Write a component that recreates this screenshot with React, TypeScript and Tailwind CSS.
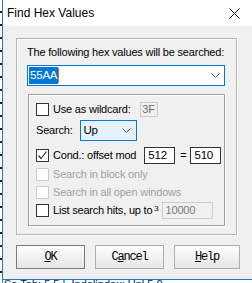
import React from 'react'

const sans = { fontFamily: '"Liberation Sans", Arial, sans-serif' }

function Check({ checked = false, disabled = false }: { checked?: boolean; disabled?: boolean }) {
  return (
    <div
      className={`w-[13px] h-[13px] shrink-0 bg-white border ${disabled ? 'border-[#cccccc]' : 'border-[#333333]'} flex items-center justify-center`}
    >
      {checked && (
        <svg width="11" height="11" viewBox="0 0 11 11">
          <polyline points="1.5,5.5 4,8.5 9.5,1.5" fill="none" stroke="#333" strokeWidth="1.2" />
        </svg>
      )}
    </div>
  )
}

function Chevron() {
  return (
    <svg width="9" height="5" viewBox="0 0 9 5">
      <polyline points="0.5,0.5 4.5,4.5 8.5,0.5" fill="none" stroke="#555" strokeWidth="1" />
    </svg>
  )
}

function Button({ children, isDefault = false, w }: { children: React.ReactNode; isDefault?: boolean; w: string }) {
  return (
    <div
      className={`${w} h-[24px] flex items-center justify-center border ${isDefault ? 'border-[#7a7a7a]' : 'border-[#adadad]'} bg-gradient-to-b from-[#fdfdfd] to-[#e6e6e6] text-[12px] tracking-[-1.2px] text-black`}
      style={{ fontFamily: '"Liberation Mono", "Courier New", monospace' }}
    >
      {children}
    </div>
  )
}

export default function App() {
  return (
    <div className="w-[252px] h-[283px] overflow-hidden flex bg-white text-black" style={sans}>
      <div className="w-[2px] h-full bg-[repeating-linear-gradient(to_bottom,#fff_0,#fff_11px,#222_11px,#222_13px)]" />
      <div className="flex-1 flex flex-col border-l border-[#1a7fd4]">
        <div className="h-[26px] flex items-center justify-between pl-[4px] pr-[12px] bg-white text-[12px]">
          <span>Find Hex Values</span>
          <svg width="11" height="11" viewBox="0 0 11 11">
            <path d="M0.5 0.5 L10.5 10.5 M10.5 0.5 L0.5 10.5" stroke="#111" strokeWidth="1" />
          </svg>
        </div>
        <div className="h-[253px] bg-[#f0f0f0] pt-[12px] pl-[13px] text-[11px] tracking-[-0.2px]">
          <div className="w-[221px] h-[197px] border border-[#b4b4b4] shadow-[inset_1px_1px_0_#fff,1px_1px_0_#fff] pt-[7px] pl-[10px]">
            <div className="h-[13px] leading-[13px]">The following hex values will be searched:</div>
            <div className="mt-[6px] w-[198px] h-[21px] border border-[#0078d7] bg-white flex items-center pl-[1px] pr-[4px] justify-between">
              <div className="flex items-center h-[17px]">
                <span className="bg-[#0078d7] text-white h-[17px] leading-[17px] px-[1px] text-[11.5px]">55AA</span>
                <span className="w-[1px] h-[15px] bg-[#e07010]" />
              </div>
              <Chevron />
            </div>
            <div className="mt-[8px] ml-[1px] w-[197px] h-[132px] border border-[#a0a0a0] shadow-[inset_1px_1px_0_#fff,1px_1px_0_#fff] pl-[7px] pt-[6px]">
              <div className="h-[16px] flex items-center">
                <Check />
                <span className="ml-[4px]">Use as wildcard:</span>
                <div className="ml-[9px] w-[18px] h-[15px] border border-[#cccccc] bg-[#f0f0f0] text-[#6d6d6d] flex items-center justify-center">3F</div>
              </div>
              <div className="mt-[3px] h-[21px] flex items-center">
                <span>Search:</span>
                <div className="ml-[7px] w-[57px] h-[21px] border border-[#0078d7] bg-[#e5f1fb] flex items-center justify-between pl-[3px] pr-[5px]">
                  <span className="text-[11.5px]">Up</span>
                  <Chevron />
                </div>
              </div>
              <div className="mt-[6px] h-[17px] flex items-center">
                <Check checked />
                <span className="ml-[4px]">Cond.: offset mod</span>
                <div className="ml-[8px] w-[31px] h-[17px] border border-[#333] bg-white flex items-center pl-[3px] text-[11.5px]">512</div>
                <span className="ml-[5px]">=</span>
                <div className="ml-[4px] w-[31px] h-[17px] border border-[#333] bg-white flex items-center pl-[3px] text-[11.5px]">510</div>
              </div>
              <div className="mt-[2px] h-[17px] flex items-center text-[#a0a0a0]">
                <Check disabled />
                <span className="ml-[4px]">Search in block only</span>
              </div>
              <div className="mt-[1px] h-[17px] flex items-center text-[#a0a0a0]">
                <Check disabled />
                <span className="ml-[4px]">Search in all open windows</span>
              </div>
              <div className="mt-[1px] h-[17px] flex items-center">
                <Check />
                <span className="ml-[4px]">List search hits, up to</span>
                <span className="ml-[2px] text-[8px] self-start mt-[1px]">3</span>
                <div className="ml-[3px] w-[51px] h-[17px] border border-[#cccccc] bg-[#f0f0f0] text-[#7a7a7a] flex items-center pl-[3px]">10000</div>
              </div>
            </div>
          </div>
          <div className="mt-[10px] flex gap-[10px]">
            <Button isDefault w="w-[69px]">
              <span className="underline">O</span>K
            </Button>
            <Button w="w-[69px]">
              C<span className="underline">a</span>ncel
            </Button>
            <Button w="w-[66px]">
              <span className="underline">H</span>elp
            </Button>
          </div>
        </div>
        <div className="border-t border-[#1a7fd4] h-[4px] overflow-hidden bg-white">
          <div className="text-[11px] leading-[11px] -mt-[1px] pl-[1px] whitespace-nowrap text-[#222]">Sa Tab: 5.5 |&nbsp; Indolindex: Unl 5,0</div>
        </div>
      </div>
    </div>
  )
}
